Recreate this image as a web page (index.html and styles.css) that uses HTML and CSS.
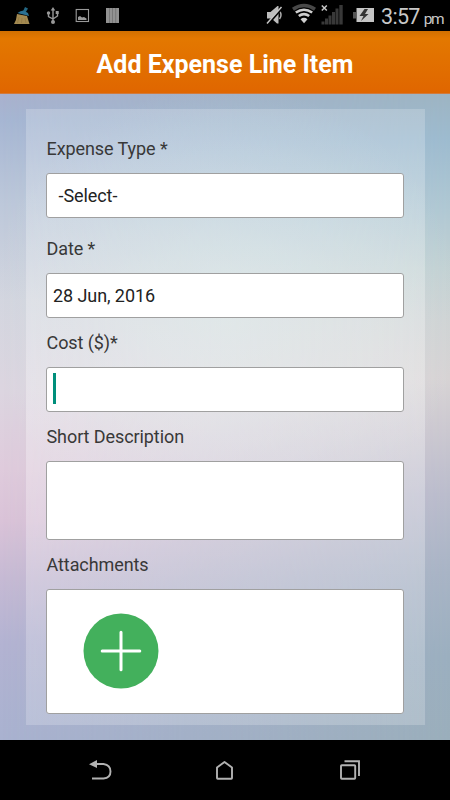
FILE: index.html
```html
<!DOCTYPE html>
<html lang="en">
<head>
<meta charset="utf-8">
<title>Add Expense Line Item</title>
<link rel="stylesheet" href="styles.css">
</head>
<body>
<div class="screen">
  <div class="status">
    <svg class="status-icons" width="125" height="31" viewBox="0 0 125 31">
      <path d="M25 7l3 1.500-3 5-2.500-1z" fill="#236783"/>
      <path d="M17.500 13q3-2.500 6-2.500l4.500 2.500 1 3z" fill="#2b7193"/>
      <path d="M17 14l10 2 2.500 8H14q2.500-4 3-10z" fill="#a38950"/>
      <path d="M19 17l-1.500 6M22 18l-.5 5M25 18l1 5" stroke="#8b7442" stroke-width=".6"/>
      <g fill="none" stroke="#989898" stroke-width="1.400"><path d="M53 9v13M48.500 13v3.500l4.500 2.500 4.500-3V12"/></g>
      <path d="M53 7l2.300 3.500h-4.600zM55.700 11h3v3h-3z" fill="#989898"/><circle cx="48.500" cy="13" r="1.700" fill="#989898"/><circle cx="53" cy="22" r="2" fill="#989898"/>
      <rect x="76.200" y="9.500" width="12.300" height="12" fill="none" stroke="#999" stroke-width="1.100"/>
      <path d="M78 20v-3l2-1 2 1.500 2-.5 2.500 1.500V20z" fill="#999"/>
      <path d="M106 8h13v15h-13z" fill="#929292"/><path d="M109.500 8v15M112.500 8v15M115.700 8v15" stroke="#666" stroke-width=".6"/>
    </svg>
    <svg class="status-icons" width="114" height="31" viewBox="264 0 114 31">
      <path d="M267 12h3.500l7-6h1v17.500h-1.500l-5.500-5h-4.500z" fill="#bdbdbd"/><path d="M279.500 11q3 4 0 8" fill="none" stroke="#aaa" stroke-width="1.500"/>
      <path d="M268.200 24l14-16" stroke="#000" stroke-width="2"/><path d="M267 23.500l14.500-16.500" stroke="#c5c5c5" stroke-width="1.500"/>
      <g fill="none"><path d="M293 9.200q11-7.500 22 0" stroke="#484848" stroke-width="3.500"/><path d="M295.800 12.500q8.200-5.500 16.400 0M298.800 16q5.200-3.700 10.400 0" stroke="#cfcfcf" stroke-width="2.700"/></g>
      <path d="M300.500 19.200q3.500-2.800 7 0l-3.500 4z" fill="#cfcfcf"/>
      <path d="M321.800 5.500l5 5M326.800 5.500l-5 5" stroke="#c8c8c8" stroke-width="1.500"/>
      <path d="M321.500 24.500v-3h3v3zM325 24.500v-6h3v6zM328.500 24.500v-9h3v9zM332 24.500V12h3v12.500zM335.500 24.500V8.500h3v16zM339.300 24.500V5h3.400v19.500z" fill="#383838"/>
      <path d="M353 12h3v6.500h-3z" fill="#555"/><path d="M356.500 8H374v14h-17.500z" fill="#c5c5c5"/><path d="M364.500 9l-5 7h4l-2.500 5 7.500-7H365l3-5z" fill="#333"/>
    </svg>
    <div class="clock">3:57<span class="ampm">pm</span></div>
  </div>
  <header class="header"><h1 class="title">Add Expense Line Item</h1></header>
  <main class="content">
    <form class="panel">
      <div class="label">Expense Type *</div>
      <div class="field select">-Select-</div>
      <div class="label date">Date *</div>
      <div class="field">28 Jun, 2016</div>
      <div class="label">Cost ($)*</div>
      <div class="field"><span class="caret"></span></div>
      <div class="label">Short Description</div>
      <div class="field description"></div>
      <div class="label">Attachments</div>
      <div class="field attachments">
        <svg width="76" height="76" viewBox="0 0 76 76"><circle cx="38" cy="38" r="37.500" fill="#43b05c"/><path d="M38 19.200v37.600M19.200 38h37.600" stroke="#fff" stroke-width="3" stroke-linecap="round"/></svg>
      </div>
    </form>
  </main>
  <nav class="nav">
    <svg width="450" height="60" viewBox="0 740 450 60" fill="none" stroke="#b2b2b2" stroke-width="1.900">
      <path d="M95 764h8.500q7 1 7 7.500t-7 7H92"/><path d="M89 764.300l8-4.300v8z" fill="#b2b2b2" stroke="none"/>
      <path d="M217 767.500l7.500-5.500 7.500 5.500V778q0 .7-.7.700h-13.600q-.7 0-.7-.7z" stroke-linejoin="round"/>
      <rect x="341" y="765.200" width="14.200" height="13.600" rx=".7"/><path d="M344.500 761.200H359V776"/>
    </svg>
  </nav>
</div>
</body>
</html>
```
FILE: styles.css
```css
* { box-sizing: border-box; }
body { margin: 0; background: #000; font-family: Roboto, "Liberation Sans", sans-serif; }
svg { display: block; }
.screen { width: 450px; height: 800px; display: flex; flex-direction: column; overflow: hidden; }
.status { height: 31px; display: flex; background: #000; }
.status-icons { flex: none; }
.status-icons + .status-icons { margin-left: 139px; }
.clock { margin-left: 3px; color: #c8c8c8; font-size: 21.5px; line-height: 33px; letter-spacing: -.7px; white-space: nowrap; }
.ampm { margin-left: 4px; font-size: 15.5px; letter-spacing: -1.3px; }
.header { height: 63px; display: flex; align-items: center; justify-content: center; background: linear-gradient(#d17000, #e37800 12%, #e06600); border-bottom: 1px solid #d27a3b; }
.title { margin: 6px 0 0; color: #fff; font-size: 25px; line-height: 30px; font-weight: 700; white-space: nowrap; }
.content { height: 646px; padding: 15px 25px 15px 26px; position: relative; isolation: isolate; background: linear-gradient(#a9b1cd 0, #a6b6d3 4%, #bdc8da 17%, #d3d5df 32%, #dcd5e0 46%, #dfcbdc 58%, #dac3d8 66%, #c6bad4 75%, #b3b3d2 85%, #a9b2d0 100%); }
.content::before { content: ""; position: absolute; z-index: -1; inset: 0; background: linear-gradient(#9db4c2 0, #9dbbcf 7%, #b0c8d3 18%, #c2d1d3 27%, #cfd3d4 35%, #d7d3d4 44%, #cbc8d0 52%, #babccc 62%, #a8b4c5 74%, #9bafbf 87%, #9aaebb 100%); mask-image: linear-gradient(90deg, transparent, #000); }
.content::after { content: ""; position: absolute; z-index: -1; inset: 0; background: radial-gradient(ellipse 240px 230px at 225px 220px, rgba(218,239,235,.4), rgba(218,239,235,0)); }
.panel { height: 616px; padding: 24px 21px 0 20px; background: linear-gradient(rgba(255,255,255,.2), rgba(255,255,255,.3) 50%, rgba(255,255,255,.2)); }
.label { height: 31px; margin-bottom: 9px; padding-left: .5px; color: #383838; font-size: 18px; line-height: 32px; letter-spacing: -.08px; }
.field { height: 45px; margin-bottom: 9px; padding-left: 6px; display: flex; align-items: center; background: #fff; border: 1px solid #a0a0a0; border-radius: 3px; color: #222; font-size: 18px; letter-spacing: -.08px; }
.select { padding-left: 11.5px; }
.label.date { margin-top: 15px; }
.caret { width: 2.5px; height: 31px; margin-bottom: 2px; background: #008f7b; }
.description { height: 79px; }
.attachments { height: 125px; padding: 23px 0 0 36px; align-items: flex-start; margin-bottom: 0; }
.nav { height: 60px; background: #000; }
```
